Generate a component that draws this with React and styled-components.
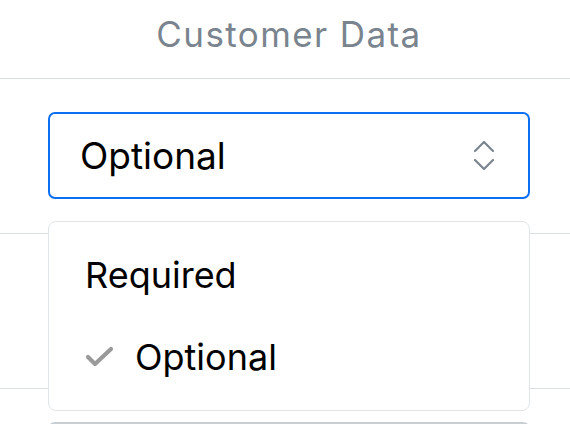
import React from 'react';
import styled, { createGlobalStyle } from 'styled-components';

const GlobalStyle = createGlobalStyle`
  body {
    margin: 0;
    background: #ffffff;
    font-family: Inter, "Noto Sans", sans-serif;
  }
`;

const Table = styled.div`
  width: 570px;
  height: 424px;
  overflow: hidden;
`;

const HeaderCell = styled.div`
  height: 79px;
  border-bottom: 1px solid #d8dde1;
  display: flex;
  align-items: center;
  justify-content: center;
  padding: 0 40px 10px 48px;
  box-sizing: border-box;
  font-size: 35px;
  letter-spacing: 1.4px;
  color: #7a848e;
`;

const Row = styled.div`
  padding: 33px 40px 34px 48px;
  border-bottom: 1px solid #dadfe3;
`;

const SelectWrap = styled.div`
  position: relative;
`;

const SelectBox = styled.div`
  height: 87px;
  box-sizing: border-box;
  border: 2px solid ${(p) => (p.$active ? '#0b6ff3' : '#c9ced3')};
  border-radius: 7px;
  display: flex;
  align-items: center;
  justify-content: space-between;
  padding: 0 34px 0 30px;
  font-size: 37px;
  color: #000;
`;

const Menu = styled.div`
  position: absolute;
  top: calc(100% + 22px);
  left: 0;
  width: 482px;
  box-sizing: border-box;
  background: #fff;
  border: 1px solid #e2e5e8;
  border-radius: 8px;
  padding: 12px 0;
  z-index: 2;
`;

const MenuItem = styled.div`
  height: 82px;
  display: flex;
  align-items: center;
  padding-left: 36px;
  font-size: 36px;
  color: #000;
`;

const CheckSlot = styled.span`
  width: 50px;
  display: flex;
  align-items: center;
`;

const Chevrons = () => (
  <svg width="20" height="31" viewBox="0 0 20 31" fill="none" stroke="#7b858f" strokeWidth="2.2" strokeLinecap="round" strokeLinejoin="round">
    <path d="M1 11 L10 2 L19 11" />
    <path d="M1 20 L10 29 L19 20" />
  </svg>
);

const Check = () => (
  <svg width="30" height="22" viewBox="0 0 30 22" fill="none" stroke="#9a9a9a" strokeWidth="4.2" strokeLinecap="round" strokeLinejoin="round">
    <path d="M3 11 L10 18 L26 3" />
  </svg>
);

const options = ['Required', 'Optional'];

export default function App() {
  const value = 'Optional';
  return (
    <>
      <GlobalStyle />
      <Table>
        <HeaderCell>Customer Data</HeaderCell>
        <Row>
          <SelectWrap>
            <SelectBox $active>
              <span>{value}</span>
              <Chevrons />
            </SelectBox>
            <Menu>
              {options.map((o) => (
                <MenuItem key={o}>
                  {o === value && (
                    <CheckSlot>
                      <Check />
                    </CheckSlot>
                  )}
                  {o}
                </MenuItem>
              ))}
            </Menu>
          </SelectWrap>
        </Row>
        {/* rows below sit under the open menu / past the fold */}
        <Row>
          <SelectBox>
            <span />
            <Chevrons />
          </SelectBox>
        </Row>
        <Row>
          <SelectBox>
            <span />
            <Chevrons />
          </SelectBox>
        </Row>
      </Table>
    </>
  );
}
